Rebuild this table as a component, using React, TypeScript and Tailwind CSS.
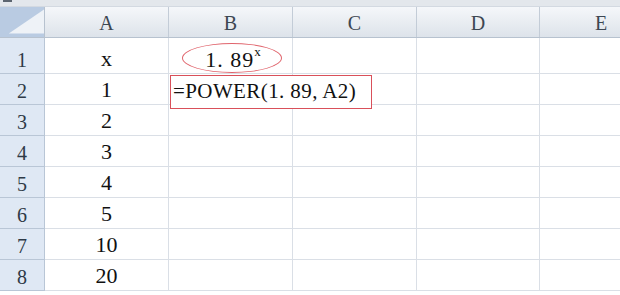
import React from "react";

const serif = { fontFamily: '"Liberation Serif", "Times New Roman", serif' };

const cols = ["A", "B", "C", "D", "E"];
const colW = ["w-[124px]", "w-[124px]", "w-[124px]", "w-[123px]", "w-[123px]"];
const rows: { n: number; a: string; h: string }[] = [
  { n: 1, a: "x", h: "h-[36px]" },
  { n: 2, a: "1", h: "h-[31px]" },
  { n: 3, a: "2", h: "h-[31px]" },
  { n: 4, a: "3", h: "h-[31px]" },
  { n: 5, a: "4", h: "h-[31px]" },
  { n: 6, a: "5", h: "h-[31px]" },
  { n: 7, a: "10", h: "h-[31px]" },
  { n: 8, a: "20", h: "h-[31px]" },
];

export default function App() {
  return (
    <div className="w-[620px] h-[295px] overflow-hidden bg-white" style={serif}>
      <div className="h-[7px] bg-[#e3e7ec] relative border-b border-[#d3d9e1]">
        <div className="absolute left-[3px] top-0 w-[9px] h-[2px] bg-[#5c6570]" />
      </div>
      <div className="flex h-[31px] w-[700px] border-b border-[#b7c2cf] bg-gradient-to-b from-[#f5f7fa] to-[#dde3ea]">
        <div className="w-[45px] shrink-0 border-r border-[#b7c2cf] bg-[#b9cbe2] relative overflow-hidden">
          <div
            className="absolute inset-0 bg-[#eef2f7]"
            style={{ clipPath: "polygon(100% 8%, 100% 88%, 20% 88%)" }}
          />
        </div>
        {cols.map((c, i) => (
          <div
            key={c}
            className={`${colW[i]} shrink-0 border-r border-[#c3ccd7] flex items-center justify-center pt-[2px] text-[20px] text-[#3d4752]`}
          >
            {c}
          </div>
        ))}
      </div>
      {rows.map((r) => (
        <div key={r.n} className={`flex ${r.h} w-[700px]`}>
          <div className="w-[45px] shrink-0 border-r border-b border-[#b9c6d6] bg-[#dfe8f4] flex items-end justify-center pb-[3px] leading-none text-[20px] text-[#2e3a47]">
            {r.n}
          </div>
          <div className="w-[124px] shrink-0 border-r border-b border-[#dadfe6] flex items-end justify-center pb-[3px] leading-none text-[22px] text-[#111]">
            {r.a}
          </div>
          <div className="w-[124px] shrink-0 border-r border-b border-[#dadfe6] relative">
            {r.n === 1 && (
              <div className="absolute left-[13px] top-[5px] w-[100px] h-[30px] rounded-[50%] border-[1.5px] border-[#e0646c] flex items-center justify-center pt-[3px] leading-none text-[22px] text-[#111]">
                <span className="pl-[2px] whitespace-nowrap tracking-[1px]">
                  1. 89<span className="text-[13px] align-top relative top-[-4px] tracking-normal">x</span>
                </span>
              </div>
            )}
            {r.n === 2 && (
              <div className="absolute z-10 bg-white left-[1px] top-[1px] w-[202px] h-[34px] border-[1.5px] border-[#d9505a] flex items-center pl-[2px] text-[21px] tracking-[0.4px] text-[#111] whitespace-nowrap">
                =POWER(1. 89, A2)
              </div>
            )}
          </div>
          <div className="w-[124px] shrink-0 border-r border-b border-[#dadfe6]" />
          <div className="w-[123px] shrink-0 border-r border-b border-[#dadfe6]" />
          <div className="w-[123px] shrink-0 border-r border-b border-[#dadfe6]" />
        </div>
      ))}
    </div>
  );
}
